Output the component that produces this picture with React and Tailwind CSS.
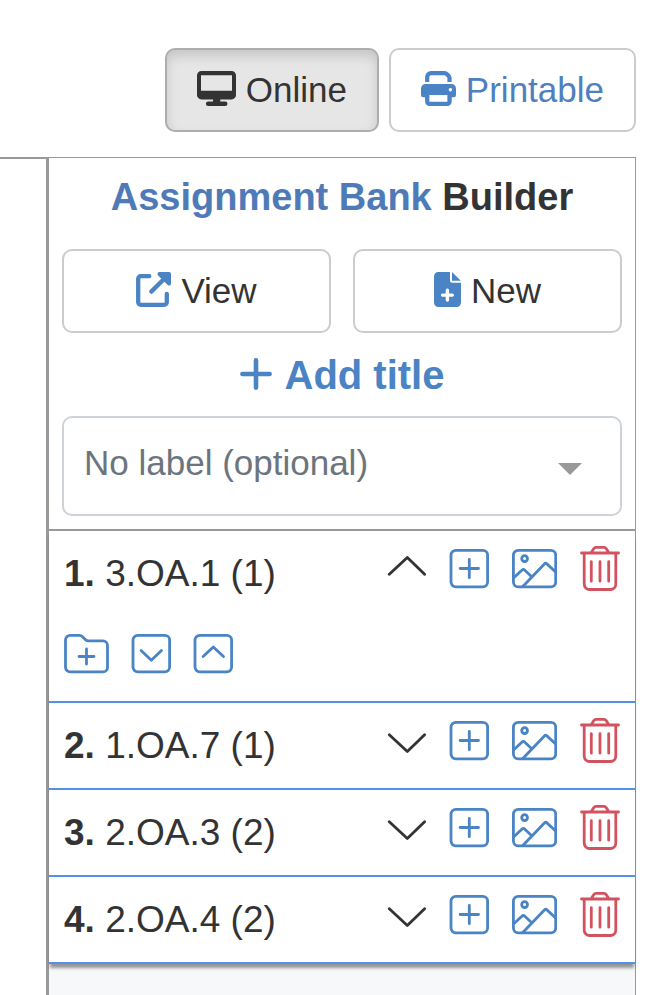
import React, { useState } from 'react';

const DesktopIcon = () => (
    <svg viewBox="0 0 39 35" className="w-[39px] h-[35px] mb-[3px] shrink-0" aria-hidden="true">
        <path
            fillRule="evenodd"
            fill="currentColor"
            d="M4.4 0h30.2A4.4 4.4 0 0 1 39 4.4v19.6a4.4 4.4 0 0 1-4.400 4.400H23.300v2H28.200a2.300 2.300 0 0 1 0 4.600H11.200a2.300 2.300 0 0 1 0-4.600H16v-2H4.400A4.400 4.400 0 0 1 0 24V4.400A4.400 4.400 0 0 1 4.400 0zM4 4.200v15.600h31V4.200z"
        />
    </svg>
);

const PrintIcon = () => (
    <svg viewBox="0 0 35 35" className="w-[35px] h-[35px] mb-[3px] shrink-0 text-[#4a84c4]" aria-hidden="true">
        <path d="M6.2 11V6a3.8 3.8 0 0 1 3.8-3.8h13.6a3.4 3.4 0 0 1 2.4 1l1.5 1.5a3.4 3.4 0 0 1 1 2.4V11" fill="none" stroke="currentColor" strokeWidth="4.2" />
        <path fillRule="evenodd" fill="currentColor" d="M4.5 13h26A4.5 4.5 0 0 1 35 17.500V24a2.200 2.200 0 0 1-2.200 2.200h-2.100v4.400a4.400 4.400 0 0 1-4.400 4.400H8.500a4.400 4.400 0 0 1-4.400-4.400v-4.400H2.200A2.200 2.200 0 0 1 0 24v-6.500A4.500 4.500 0 0 1 4.500 13zM8.400 24v6.800h18V24zM29.400 17a1.700 1.700 0 1 0 .01 0z" />
    </svg>
);

const ViewIcon = () => (
    <svg viewBox="0 0 35 35" className="w-[35px] h-[35px] mb-[3px] shrink-0 text-[#4a84c4]" aria-hidden="true">
        <path d="M13.300 4.200H4.700a2.500 2.500 0 0 0-2.500 2.500V30.300a2.500 2.500 0 0 0 2.500 2.500H28.300a2.500 2.500 0 0 0 2.500-2.500V22M15.300 19.600L28 7" fill="none" stroke="currentColor" strokeWidth="4.300" strokeLinecap="round" />
        <path d="M23.500 1H33a1 1 0 0 1 1 1v9.500c0 1-1 1.300-1.600.7L22.800 2.700C22.100 2 22.500 1 23.500 1z" fill="currentColor" stroke="currentColor" strokeWidth="2" strokeLinejoin="round" />
    </svg>
);

const NewIcon = () => (
    <svg viewBox="0 0 27 35" className="w-[27px] h-[35px] mb-[3px] shrink-0 text-[#4a84c4]" aria-hidden="true">
        <path d="M4.400 0H16v8.600a2.200 2.200 0 0 0 2.200 2.200H27v19.800a4.400 4.400 0 0 1-4.400 4.400H4.400A4.400 4.400 0 0 1 0 30.600V4.400A4.400 4.400 0 0 1 4.400 0z" fill="currentColor" />
        <path d="M18 0l8.800 8.800H18z" fill="currentColor" />
        <path d="M13.400 18.200v9.800M8.500 23.100h9.800" stroke="#fff" strokeWidth="3.400" strokeLinecap="round" />
    </svg>
);

const PlusIcon = () => (
    <svg viewBox="0 0 32 32" className="w-8 h-8 mb-px shrink-0" aria-hidden="true">
        <path d="M16 2.400v27.200M2.400 16h27.200" stroke="currentColor" strokeWidth="4.600" strokeLinecap="round" />
    </svg>
);

const LineIcon = ({ wide, children }) => (
    <svg
        viewBox={wide ? '0 0 45 45' : '0 0 40 45'}
        className={wide ? 'w-[45px] h-[45px]' : 'w-10 h-[45px]'}
        fill="none"
        stroke="currentColor"
        strokeWidth="2.8"
        strokeLinecap="round"
        strokeLinejoin="round"
        aria-hidden="true"
    >
        {children}
    </svg>
);

const Box = () => <rect x="2" y="4.300" width="36.600" height="36.600" rx="4.800" />;

const IconButton = ({ label, onClick, color = 'text-[#4a84c4]', children }) => (
    <button type="button" aria-label={label} onClick={onClick} className={`block ${color}`}>
        {children}
    </button>
);

const initialItems = [
    { id: 1, name: '3.OA.1 (1)', open: true },
    { id: 2, name: '1.OA.7 (1)', open: false },
    { id: 3, name: '2.OA.3 (2)', open: false },
    { id: 4, name: '2.OA.4 (2)', open: false },
];

const BankItem = ({ item, number, onToggle, onDelete }) => (
    <li className="border-b-2 border-[#5590e8] px-[15px]">
        <div className="flex items-start justify-between">
            <p className="py-[14px] text-[37px] leading-[57px]">
                <b>{number}.</b> {item.name}
            </p>
            <div className="flex gap-[23px] pt-[15px]">
                <IconButton label={item.open ? 'Collapse' : 'Expand'} onClick={onToggle} color="text-[#333]">
                    <LineIcon>
                        <path d={item.open ? 'M3.300 28.300L21.300 11.500l17.300 16.800' : 'M3.300 16.700l18 16.800 17.300-16.800'} />
                    </LineIcon>
                </IconButton>
                <IconButton label="Add question">
                    <LineIcon>
                        <Box />
                        <path d="M20.300 13.300v18.400M11.100 22.500h18.400" />
                    </LineIcon>
                </IconButton>
                <IconButton label="Add image">
                    <LineIcon wide>
                        <rect x="1.400" y="4.300" width="42.300" height="36.600" rx="4.800" />
                        <circle cx="12.600" cy="12.600" r="2.900" />
                        <path d="M1.800 31.800l8.300-7.800a1.800 1.800 0 0 1 2.500 0l7.100 6.700M10.800 40.500L32.400 18a1.800 1.800 0 0 1 2.500-.1l8.500 7.900" />
                    </LineIcon>
                </IconButton>
                <IconButton label="Delete" onClick={onDelete} color="text-[#d2535f]">
                    <LineIcon>
                        <path d="M1.500 7h37M11.300 6.500l2.400-3.800a2.800 2.800 0 0 1 2.400-1.300h7.800a2.800 2.800 0 0 1 2.400 1.300l2.400 3.800" />
                        <path d="M4.200 7.500v30.600a5.400 5.400 0 0 0 5.400 5.400h20.800a5.400 5.400 0 0 0 5.400-5.400V7.500M11.300 15.700v19.500M20 15.700v19.500M28.700 15.700v19.500" />
                    </LineIcon>
                </IconButton>
            </div>
        </div>
        {item.open && (
            <div className="flex gap-[22px] pt-[15px] pb-[25px]">
                <IconButton label="Add folder">
                    <LineIcon wide>
                        <path d="M6.200 4.300h9.100a4.200 4.200 0 0 1 3 1.200l3.200 3.200a4.200 4.200 0 0 0 3 1.200h14.500a4.500 4.500 0 0 1 4.500 4.500v22a4.500 4.500 0 0 1-4.500 4.500H6.200a4.700 4.700 0 0 1-4.700-4.700V9a4.700 4.700 0 0 1 4.700-4.700z" />
                        <path d="M22.500 18v15M15 25.500h15" />
                    </LineIcon>
                </IconButton>
                <IconButton label="Move down">
                    <LineIcon>
                        <Box />
                        <path d="M10.100 19.600l10.200 9.700 10.200-9.700" />
                    </LineIcon>
                </IconButton>
                <IconButton label="Move up">
                    <LineIcon>
                        <Box />
                        <path d="M10.100 25.600l10.200-9.700 10.200 9.700" />
                    </LineIcon>
                </IconButton>
            </div>
        )}
    </li>
);

const App = () => {
    const [items, setItems] = useState(initialItems);

    const toggle = (id) => setItems(items.map((i) => (i.id === id ? { ...i, open: !i.open } : i)));
    const remove = (id) => setItems(items.filter((i) => i.id !== id));

    return (
        <div className="min-h-screen flex flex-col bg-white text-[#333] font-['Liberation_Sans',Arial,sans-serif]">
            <header className="flex justify-end gap-[10px] pt-12 pr-9 pb-[25px] text-[35px]">
                <button
                    type="button"
                    className="flex items-center gap-[10px] h-[84px] px-[30px] rounded-[10px] border-2 border-[#adadad] bg-[#e6e6e6] shadow-[inset_0_6px_12px_rgba(0,0,0,0.14)]"
                >
                    <DesktopIcon />
                    Online
                </button>
                <button
                    type="button"
                    className="flex items-center gap-[10px] h-[84px] px-[30px] rounded-[10px] border-2 border-[#ccc] text-[#4f7fbf]"
                >
                    <PrintIcon />
                    Printable
                </button>
            </header>

            <main className="flex-1 flex pr-9">
                <div className="w-[46px] shrink-0 border-t-2 border-[#999]" />
                <section className="flex-1 flex flex-col border-t border-r border-l-[3px] border-[#999] bg-[#f7f8fa]">
                    <div className="bg-white px-[13px] pt-[11px] pb-[13px] border-b-2 border-[#999]">
                        <h1 className="mb-[23px] text-center text-[38px] leading-[57px] font-bold">
                            <span className="text-[#4f7ab8]">Assignment Bank</span> Builder
                        </h1>
                        <div className="grid grid-cols-2 gap-[22px] text-[35px]">
                            <button type="button" className="flex items-center justify-center gap-[10px] h-[84px] rounded-[10px] border-2 border-[#ccc]">
                                <ViewIcon />
                                View
                            </button>
                            <button type="button" className="flex items-center justify-center gap-[10px] h-[84px] rounded-[10px] border-2 border-[#ccc]">
                                <NewIcon />
                                New
                            </button>
                        </div>
                        <button type="button" className="flex items-center gap-[13px] h-[83px] mx-auto text-[40px] font-bold text-[#4a84c4]">
                            <PlusIcon />
                            Add title
                        </button>
                        <div className="relative">
                            <select
                                aria-label="Label"
                                className="block appearance-none w-full h-[100px] pl-5 pr-16 pb-[5px] rounded-[10px] border-2 border-[#ced2d9] bg-white text-[35px] text-[#6c757d]"
                            >
                                <option>No label (optional)</option>
                            </select>
                            <svg viewBox="0 0 24 12" className="absolute right-10 top-[47px] w-6 h-3 pointer-events-none" aria-hidden="true">
                                <path d="M0 0h24L12 12z" fill="#999" />
                            </svg>
                        </div>
                    </div>
                    <ol className="bg-white shadow-[0_5px_3px_-1px_rgba(0,0,0,0.4)]">
                        {items.map((item, index) => (
                            <BankItem
                                key={item.id}
                                item={item}
                                number={index + 1}
                                onToggle={() => toggle(item.id)}
                                onDelete={() => remove(item.id)}
                            />
                        ))}
                    </ol>
                </section>
            </main>
        </div>
    );
};

export default App;
